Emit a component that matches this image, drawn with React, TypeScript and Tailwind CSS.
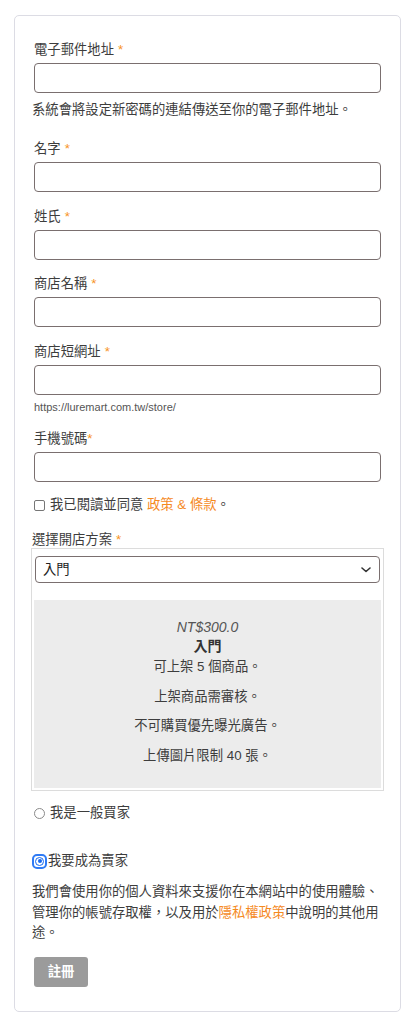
import React from "react";

const Star = () => <span className="text-[#f7931e] ml-[4px]">*</span>;

function Field({ label, mt, tight }: { label: string; mt: string; tight?: boolean }) {
  return (
    <div className={`px-[2px] ${mt}`}>
      <div className="h-[20px] leading-[20px] text-[#3d3d3d]">
        {label}
        {tight ? <span className="text-[#f7931e]">*</span> : <Star />}
      </div>
      <div className="mt-[3px] h-[30px] rounded-[4px] border border-[#7a6f6f] bg-white" />
    </div>
  );
}

export default function App() {
  return (
    <div
      className="min-h-[1024px] bg-white pt-[15px] text-[13.33px]"
      style={{ fontFamily: '"Liberation Sans", "Noto Sans CJK TC", sans-serif' }}
    >
      <div className="ml-[14px] w-[387px] rounded-[5px] border border-[#dcdce4] px-[17px] pt-[24px] pb-[24px]">
        <Field label="電子郵件地址" mt="mt-0" />
        <div className="mt-[7px] h-[20px] leading-[20px] text-[#3d3d3d]">
          系統會將設定新密碼的連結傳送至你的電子郵件地址。
        </div>
        <Field label="名字" mt="mt-[19px]" />
        <Field label="姓氏" mt="mt-[15px]" />
        <Field label="商店名稱" mt="mt-[14px]" />
        <Field label="商店短網址" mt="mt-[15px]" />
        <div className="mt-[5px] px-[2px] h-[14px] leading-[14px] text-[11px] text-[#555]">
          https://luremart.com.tw/store/
        </div>
        <Field label="手機號碼" mt="mt-[15px]" tight />
        <div className="mt-[13px] px-[2px] h-[20px] flex items-center text-[#3d3d3d]">
          <span className="inline-block w-[11px] h-[11px] rounded-[2px] border border-[#767676] bg-white" />
          <span className="ml-[5px] leading-[20px]">
            我已閱讀並同意 <span className="text-[#f58a1f]">政策 &amp; 條款</span>。
          </span>
        </div>
        <div className="mt-[16px] h-[17px] leading-[17px] text-[#3d3d3d]">
          選擇開店方案
          <Star />
        </div>
        <div className="-mx-px border border-[#dcdcdc] px-[2px] pt-[7px] pb-[2px]">
          <div className="mx-px h-[27px] rounded-[4px] border border-[#7a6f6f] bg-white flex items-center justify-between pl-[7px] pr-[8px] text-[#222]">
            <span>入門</span>
            <svg width="10" height="6" viewBox="0 0 10 6" fill="none">
              <path d="M1 1l4 3.5L9 1" stroke="#333" strokeWidth="1.6" strokeLinecap="round" strokeLinejoin="round" />
            </svg>
          </div>
          <div className="mt-[17px] h-[188px] bg-[#ececec] pt-[17px] flex flex-col items-center text-[#3d3d3d]">
            <div className="h-[20px] leading-[20px] italic text-[14px] text-[#555]">NT$300.0</div>
            <div className="h-[19px] leading-[19px] font-bold text-[14px] text-[#333]">入門</div>
            <div className="mt-px flex flex-col items-center gap-[9.5px]">
              <div className="h-[20px] leading-[20px]">可上架 5 個商品。</div>
              <div className="h-[20px] leading-[20px]">上架商品需審核。</div>
              <div className="h-[20px] leading-[20px]">不可購買優先曝光廣告。</div>
              <div className="h-[20px] leading-[20px]">上傳圖片限制 40 張。</div>
            </div>
          </div>
        </div>
        <div className="mt-[12px] px-[2px] h-[20px] flex items-center text-[#3d3d3d]">
          <span className="inline-block w-[11px] h-[11px] rounded-full border border-[#8a8a8a] bg-white" />
          <span className="ml-[5px] leading-[20px]">我是一般買家</span>
        </div>
        <div className="mt-[28px] h-[20px] flex items-center text-[#3d3d3d]">
          <span className="flex items-center justify-center w-[15px] h-[15px] rounded-[5px] border-[2px] border-[#2f7bf5] bg-white">
            <span className="flex items-center justify-center w-[9px] h-[9px] rounded-full border-[1.5px] border-[#1769f0] bg-white">
              <span className="w-[4px] h-[4px] rounded-full bg-[#1769f0]" />
            </span>
          </span>
          <span className="ml-px leading-[20px]">我要成為賣家</span>
        </div>
        <p className="mt-[11px] leading-[20.5px] text-[#3d3d3d]">
          我們會使用你的個人資料來支援你在本網站中的使用體驗、管理你的帳號存取權，以及用於
          <span className="text-[#f58a1f]">隱私權政策</span>
          中說明的其他用途。
        </p>
        <div className="mt-[13px] px-[2px]">
          <button className="w-[54px] h-[30px] rounded-[3px] bg-[#9b9b9b] text-white font-bold text-[13.33px] leading-[30px]">
            註冊
          </button>
        </div>
      </div>
    </div>
  );
}
